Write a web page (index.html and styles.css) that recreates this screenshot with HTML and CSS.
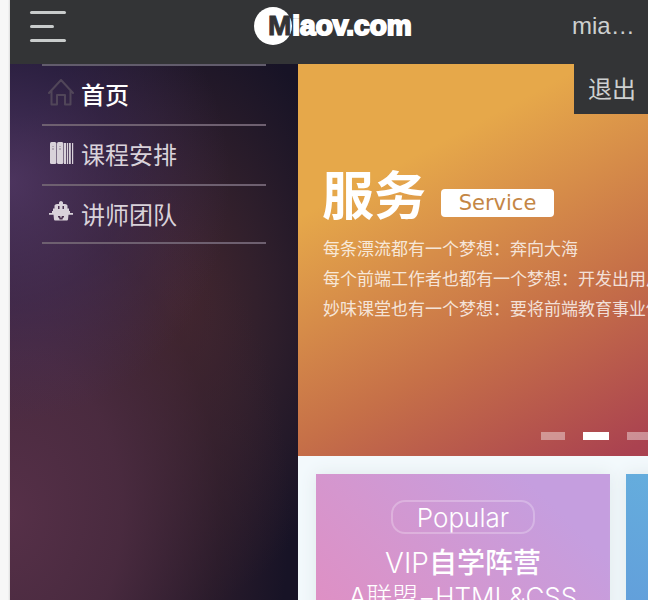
FILE: index.html
```html
<!DOCTYPE html>
<html lang="zh-CN">
<head>
<meta charset="utf-8">
<meta name="viewport" content="width=device-width, initial-scale=1">
<title>Miaov.com</title>
<link rel="stylesheet" href="styles.css">
</head>
<body>
<div class="app">
  <header class="header">
    <button class="menu-button" type="button" aria-label="菜单">
      <span class="bar"></span><span class="bar bar-short"></span><span class="bar"></span>
    </button>
    <a class="logo" href="#"><span class="logo-m">M</span><span class="logo-rest">iaov.com</span></a>
    <div class="user">
      <button class="user-name" type="button">miaov_user</button>
      <a class="logout" href="#">退出</a>
    </div>
  </header>
  <div class="body">
    <nav class="side">
      <ul class="side-list">
        <li><a class="side-link active" href="#">
          <svg class="icon" viewBox="0 0 26 28" fill="none" stroke="#514659" stroke-width="2" stroke-linejoin="round" stroke-linecap="round"><path d="M1 14 13 1 25 14M3.500 12V25.500H9V16H17V25.500H22.500V12"/></svg>首页</a></li>
        <li><a class="side-link" href="#">
          <svg class="icon" viewBox="0 0 26 28" fill="#d9d2da"><rect x="2" y="3" width="6.400" height="22" rx="1.500"/><rect x="9" y="3" width="6.400" height="22" rx="1.500"/><path d="M16 4h2.200v21h-2.200zM19 4h1.200v21h-1.200zM21 4h1.800v21h-1.800zM24 4h1.200v21h-1.200z"/><path fill="#b3a9b5" d="M4 7h2v1H4zM4 9h2v2H4zM11 7h2v1h-2zM11 9h2v2h-2z"/></svg>课程安排</a></li>
        <li><a class="side-link" href="#">
          <svg class="icon" viewBox="0 0 26 28" fill="#d9d2da"><path d="M1 14h3v-2h1V9.500h1.500V6.500Q7 5 9 5h2V3.500Q11.500 2 13 2t2 1.500V5h2q2 0 2.500 1.500v3H21V12h1v2h3v1.800h-4.500L20 20.500q-.2 1-1 1H7q-.8 0-1-1l-.5-4.700H1z"/><path fill="#49304e" d="M10 7h1.500v3H10zM14.500 7H16v3h-1.500zM10 17h6v1.500h-1l-.5 2h-3l-.5-2h-1z"/><path d="M12.300 16h1.400v2.500h-1.400z"/></svg>讲师团队</a></li>
      </ul>
    </nav>
    <main class="main">
      <section class="hero">
        <h1 class="hero-title">服务<span class="hero-tag">Service</span></h1>
        <p class="hero-text">每条漂流都有一个梦想：奔向大海</p>
        <p class="hero-text">每个前端工作者也都有一个梦想：开发出用户</p>
        <p class="hero-text">妙味课堂也有一个梦想：要将前端教育事业做</p>
        <div class="dots">
          <button class="dot" type="button" aria-label="1"></button>
          <button class="dot dot-on" type="button" aria-label="2"></button>
          <button class="dot" type="button" aria-label="3"></button>
          <button class="dot" type="button" aria-label="4"></button>
        </div>
      </section>
      <section class="cards">
        <article class="card card-pink">
          <span class="badge">Popular</span>
          <h2 class="card-title">VIP<b>自学阵营</b></h2>
          <p class="card-text">A联盟−HTML&amp;CSS</p>
        </article>
        <article class="card card-blue"></article>
      </section>
    </main>
  </div>
</div>
</body>
</html>
```
FILE: styles.css
```css
* { box-sizing: border-box; margin: 0; padding: 0; }

body {
  padding-left: 10px;
  background: linear-gradient(90deg, #f7f7f7 8px, #dcdcdc 10px);
  font-family: "Liberation Sans", "Noto Sans CJK SC", sans-serif;
  font-size: 24px;
  color: #fff;
}
button { border: 0; background: none; font: inherit; color: inherit; }
a { color: inherit; text-decoration: none; }
.app { display: flex; flex-direction: column; height: 100vh; overflow: hidden; }

.header {
  flex: none;
  position: relative;
  z-index: 1;
  display: grid;
  grid-template-columns: 1fr auto 1fr;
  align-items: center;
  height: 64px;
  padding: 0 12px 12px 20px;
  background: #333436;
  color: #cdd0d0;
}
.menu-button { display: flex; flex-direction: column; gap: 11px; width: 36px; }
.bar { width: 36px; height: 3px; border-radius: 2px; background: #c9cccc; }
.bar-short { width: 24px; }

.logo {
  display: flex;
  align-items: center;
  color: #fff;
  font-family: "Liberation Sans", sans-serif;
  font-size: 28px;
  font-weight: 700;
  line-height: 38px;
  -webkit-text-stroke: 2px currentColor;
}
.logo-m {
  width: 38px;
  height: 38px;
  padding-right: 1px;
  border-radius: 50%;
  background: #fff;
  color: #333436;
  text-align: right;
  -webkit-text-stroke-width: 1px;
}

.user { justify-self: end; }
.user-name {
  display: block;
  width: 64px;
  overflow: hidden;
  white-space: nowrap;
  text-overflow: ellipsis;
  text-align: left;
}
.logout {
  position: absolute;
  top: 64px;
  right: 0;
  padding: 2px 12px 0 14px;
  background: #333436;
  line-height: 48px;
}

.body { flex: 1; display: flex; min-height: 0; }
.side {
  flex: none;
  width: 288px;
  padding: 0 32px;
  background:
    radial-gradient(ellipse 220px 240px at 0 22%, rgba(83, 57, 103, 0.85), rgba(70, 48, 98, 0.45) 50%, transparent),
    radial-gradient(ellipse 280px 400px at 0 84%, #563048, rgba(77, 44, 65, 0.9) 40%, rgba(60, 35, 48, 0.5) 75%, transparent),
    radial-gradient(ellipse 190px 300px at 56% 46%, #47282f, rgba(58, 36, 46, 0.7) 50%, transparent),
    #171326;
}
.side-list { list-style: none; border-top: 2px solid #625c6c; }
.side-list li { height: 60px; border-bottom: 2px solid #6e6070; }
.side-list li:last-child { height: 58px; }
.side-link {
  display: flex;
  align-items: center;
  gap: 7px;
  height: 54px;
  padding-left: 6px;
  color: #d9d2da;
}
.side-link.active { color: #fff; font-weight: 500; }
.icon { width: 26px; height: 28px; }

.main { flex: none; width: 100%; background: #f3f9fc; }
.hero {
  display: flex;
  flex-direction: column;
  height: 392px;
  padding: 97px 24px 16px;
  background: linear-gradient(152deg, #e6a84a 21%, #c67048 52%, #aa4250 77%, #a03850);
}
.hero-title {
  display: flex;
  align-items: center;
  gap: 15px;
  height: 72px;
  font-size: 52px;
  font-weight: 700;
  line-height: 72px;
}
.hero-tag {
  width: 113px;
  height: 28px;
  margin-top: 12px;
  border-radius: 4px;
  background: #fff;
  color: #c48645;
  font-family: "DejaVu Sans", sans-serif;
  font-size: 21px;
  font-weight: 400;
  line-height: 29px;
  text-align: center;
}
.hero-text {
  padding-left: 1px;
  font-family: "Noto Sans CJK SC", sans-serif;
  font-size: 17px;
  font-weight: 400;
  line-height: 30px;
  white-space: nowrap;
  color: rgba(255, 255, 255, 0.8);
}
.dots { display: flex; justify-content: center; gap: 18px; margin-top: auto; }
.dot { width: 24px; height: 8px; background: rgba(255, 255, 255, 0.4); }
.dot-on { width: 26px; background: #fff; }

.cards { display: grid; grid-template-columns: 1fr 1fr; gap: 16px; padding: 18px 16px 18px 18px; }
.card {
  display: flex;
  flex-direction: column;
  align-items: center;
  height: 290px;
  padding-top: 26px;
  box-shadow: 0 0 16px #dfe8eb;
}
.card-pink { background: linear-gradient(45deg, #ea88b8, #d596ce 50%, #c59edf 85%); }
.card-blue { background: linear-gradient(20deg, #5f8fd8, #66b3de 90%); }
.badge {
  width: 144px;
  height: 34px;
  border: 2px solid rgba(255, 255, 255, 0.25);
  border-radius: 14px;
  font-family: Inter, sans-serif;
  font-size: 26px;
  font-weight: 300;
  line-height: 32px;
  text-align: center;
}
.card-title {
  margin-top: 10px;
  font-family: Inter, "Noto Sans CJK SC", sans-serif;
  font-size: 28px;
  font-weight: 300;
  line-height: 38px;
}
.card-title b { font-weight: 500; }
.card-text {
  font-family: Inter, "Noto Sans CJK SC", sans-serif;
  font-size: 26px;
  font-weight: 300;
  line-height: 30px;
  white-space: nowrap;
}
```
